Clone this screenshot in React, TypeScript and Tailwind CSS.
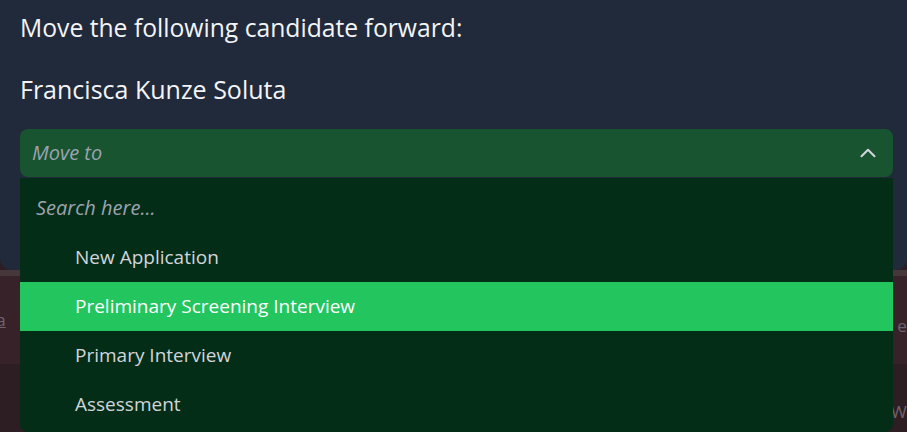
import { ChevronUp } from "lucide-react";

const stages = [
  "New Application",
  "Preliminary Screening Interview",
  "Primary Interview",
  "Assessment",
];

export default function App() {
  const active = 1;

  return (
    <div className="relative h-[432px] w-[907px] overflow-hidden bg-[#2d1e23] font-['Open_Sans',sans-serif]">
      {/* modal panel */}
      <div className="h-[270px] rounded-b-xl bg-[#212a3a] pl-5 pr-[14px] pt-[12px] text-[#f3f4f6]">
        <h2 className="text-[24.7px] leading-8">Move the following candidate forward:</h2>
        <p className="mt-[29px] text-[25px] leading-8">Francisca Kunze Soluta</p>

        <div className="relative mt-[24px]">
          <button className="flex h-12 w-full items-center justify-between rounded-lg bg-[#18542f] pl-3 pr-[12px] text-left">
            <span className="text-[20px] italic text-[#9ca3af]">Move to</span>
            <ChevronUp size={26} strokeWidth={1.9} className="text-[#d1d5db]" />
          </button>

          <div className="absolute left-0 right-0 top-[49px] z-10 h-[254px] rounded-b-lg bg-[#042d18]">
            <div className="px-4 pb-[12px] pt-[16px]">
              <input
                placeholder="Search here..."
                className="w-full bg-transparent text-[20px] leading-[27px] italic text-[#d1d5db] outline-none placeholder:text-[#9ca3af]"
              />
            </div>
            <ul>
              {stages.map((s, i) => (
                <li
                  key={s}
                  className={
                    i === active
                      ? "flex h-[49px] items-center bg-[#22c55e] pl-[55px] text-[19px] text-white"
                      : "flex h-[49px] items-center pl-[55px] text-[19px] text-[#d1d5db]"
                  }
                >
                  {s}
                </li>
              ))}
            </ul>
          </div>
        </div>
      </div>

      {/* page behind the backdrop */}
      <div className="h-[6px] bg-[#46383a]" />
      <div className="flex h-[88px] items-center justify-between bg-[#37222a] text-[17px] text-[#6e6470]">
        <span className="-ml-[8px] underline">la</span>
        <span className="-mr-[8px] mt-[12px]">ec</span>
      </div>
      <div className="flex h-[68px] items-end justify-end text-[17px] text-[#6e6470]">
        <span className="-mr-[10px] pb-2">Wo</span>
      </div>
    </div>
  );
}
